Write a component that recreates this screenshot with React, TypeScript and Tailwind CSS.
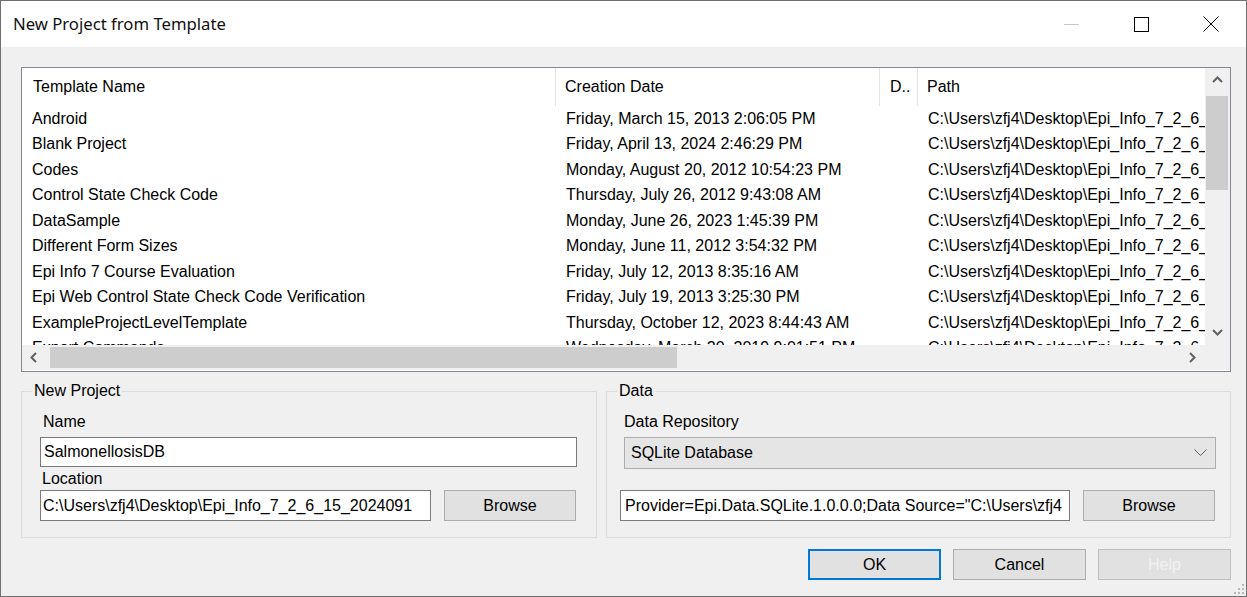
import React from "react";

const rows = [
  ["Android", "Friday, March 15, 2013 2:06:05 PM"],
  ["Blank Project", "Friday, April 13, 2024 2:46:29 PM"],
  ["Codes", "Monday, August 20, 2012 10:54:23 PM"],
  ["Control State Check Code", "Thursday, July 26, 2012 9:43:08 AM"],
  ["DataSample", "Monday, June 26, 2023 1:45:39 PM"],
  ["Different Form Sizes", "Monday, June 11, 2012 3:54:32 PM"],
  ["Epi Info 7 Course Evaluation", "Friday, July 12, 2013 8:35:16 AM"],
  ["Epi Web Control State Check Code Verification", "Friday, July 19, 2013 3:25:30 PM"],
  ["ExampleProjectLevelTemplate", "Thursday, October 12, 2023 8:44:43 AM"],
  ["Export Commands", "Wednesday, March 20, 2019 9:01:51 PM"],
];

const PATH = "C:\\Users\\zfj4\\Desktop\\Epi_Info_7_2_6_15_20240910\\Projects\\Templates";

// small scrollbar arrow, points up/down/left/right
function Arrow({ dir }: { dir: "up" | "down" | "left" | "right" }) {
  const pts = {
    up: "1,7 5.5,2.5 10,7",
    down: "1,3 5.5,7.5 10,3",
    left: "7,1 2.5,5.5 7,10",
    right: "3,1 7.5,5.5 3,10",
  }[dir];
  return (
    <svg width="11" height="11" viewBox="0 0 11 11">
      <polyline points={pts} fill="none" stroke="#606060" strokeWidth="2" />
    </svg>
  );
}

function Btn({ children, className = "" }: { children: React.ReactNode; className?: string }) {
  return (
    <div className={`flex items-center justify-center w-[132px] h-[31px] border bg-[#e1e1e1] ${className}`}>
      {children}
    </div>
  );
}

export default function App() {
  return (
    <div className="relative w-[1247px] h-[597px] border border-[#6f6f6f] bg-[#f0f0f0] flex flex-col overflow-hidden text-[16px] text-black font-['Liberation_Sans',Arial,sans-serif]">
      {/* title bar */}
      <div className="h-[46px] bg-white flex items-center shrink-0">
        <div className="pl-[12px] flex-1 text-[16.7px] font-['Noto_Sans',sans-serif] text-[#111]">
          New Project from Template
        </div>
        <div className="w-[70px] h-full flex items-center justify-center">
          <div className="w-[15px] h-px bg-[#c8c8c8]" />
        </div>
        <div className="w-[70px] h-full flex items-center justify-center">
          <div className="w-[15px] h-[15px] border border-black" />
        </div>
        <div className="w-[70px] h-full flex items-center justify-center">
          <svg width="16" height="16" viewBox="0 0 16 16">
            <path d="M0.5 0.5 L15.5 15.5 M15.5 0.5 L0.5 15.5" stroke="#000" strokeWidth="1" />
          </svg>
        </div>
      </div>

      <div className="flex-1 flex flex-col pt-[20px] pl-[20px] pr-[15px]">
        {/* template list */}
        <div className="h-[305px] border border-[#828790] bg-white flex flex-col">
          <div className="flex h-[277px]">
            <div className="flex-1 overflow-hidden">
              <div className="flex h-[38px] items-center whitespace-nowrap">
                <div className="w-[534px] h-full flex items-center pl-[11px] border-r border-[#e5e5e5]">Template Name</div>
                <div className="w-[324px] h-full flex items-center pl-[9px] border-r border-[#e5e5e5]">Creation Date</div>
                <div className="w-[38px] h-full flex items-center pl-[10px] border-r border-[#e5e5e5]">D..</div>
                <div className="flex-1 h-full flex items-center pl-[9px]">Path</div>
              </div>
              {rows.map(([name, date]) => (
                <div key={name} className="flex h-[25.5px] items-center whitespace-nowrap">
                  <div className="w-[534px] pl-[10px] overflow-hidden">{name}</div>
                  <div className="w-[324px] pl-[10px] overflow-hidden">{date}</div>
                  <div className="w-[38px]" />
                  <div className="flex-1 pl-[10px] overflow-hidden">{PATH}</div>
                </div>
              ))}
            </div>
            {/* vertical scrollbar */}
            <div className="w-[25px] bg-[#f0f0f0] flex flex-col">
              <div className="h-[25px] flex items-center justify-center"><Arrow dir="up" /></div>
              <div className="flex-1 pt-[3px] px-[1px]">
                <div className="h-[94px] w-[22px] bg-[#cdcdcd]" />
              </div>
              <div className="h-[25px] flex items-center justify-center"><Arrow dir="down" /></div>
            </div>
          </div>
          {/* horizontal scrollbar */}
          <div className="flex h-[25px]">
            <div className="flex-1 bg-[#f0f0f0] flex items-center">
              <div className="w-[25px] h-full flex items-center justify-center"><Arrow dir="left" /></div>
              <div className="flex-1 h-full py-[2px] pl-[3px]">
                <div className="w-[627px] h-full bg-[#cdcdcd]" />
              </div>
              <div className="w-[25px] h-full flex items-center justify-center"><Arrow dir="right" /></div>
            </div>
            <div className="w-[25px] bg-[#f0f0f0]" />
          </div>
        </div>

        {/* group boxes */}
        <div className="flex gap-[9px] mt-[10px]">
          <fieldset className="w-[576px] border border-[#dcdcdc]">
            <legend className="ml-[10px] px-[2px] leading-[18px]">New Project</legend>
            <div className="px-[18px] pb-[16px]">
              <div className="mt-[13px] pl-[3px] leading-[18px]">Name</div>
              <div className="mt-[6px] h-[30px] border border-[#7a7a7a] bg-white flex items-center pl-[3px] mr-[1px]">SalmonellosisDB</div>
              <div className="mt-[3px] pl-[2px] leading-[18px]">Location</div>
              <div className="mt-[2px] flex gap-[13px]">
                <div className="w-[391px] h-[31px] border border-[#7a7a7a] bg-white flex items-center pl-[2px] whitespace-nowrap overflow-hidden">
                  C:\Users\zfj4\Desktop\Epi_Info_7_2_6_15_2024091
                </div>
                <Btn className="border-[#adadad] h-[30px]">Browse</Btn>
              </div>
            </div>
          </fieldset>

          <fieldset className="w-[625px] border border-[#dcdcdc]">
            <legend className="ml-[10px] px-[2px] leading-[18px]">Data</legend>
            <div className="pl-[13px] pr-[14px] pb-[16px]">
              <div className="mt-[13px] pl-[4px] leading-[18px]">Data Repository</div>
              <div className="mt-[6px] ml-[4px] h-[32px] border border-[#adadad] bg-[#e5e5e5] flex items-center pl-[6px] pr-[8px]">
                <span className="flex-1">SQLite Database</span>
                <svg width="13" height="8" viewBox="0 0 13 8">
                  <polyline points="0.5,0.5 6.5,6.5 12.5,0.5" fill="none" stroke="#606060" strokeWidth="1" />
                </svg>
              </div>
              <div className="mt-[21px] flex gap-[13px]">
                <div className="w-[450px] h-[31px] border border-[#7a7a7a] bg-white flex items-center pl-[4px] whitespace-nowrap overflow-hidden">
                  Provider=Epi.Data.SQLite.1.0.0.0;Data Source="C:\Users\zfj4
                </div>
                <Btn className="border-[#adadad]">Browse</Btn>
              </div>
            </div>
          </fieldset>
        </div>

        {/* dialog buttons */}
        <div className="flex justify-end gap-[12px] mt-[11px]">
          <Btn className="w-[133px] border-2 border-[#0078d7]">OK</Btn>
          <Btn className="w-[133px] border-[#adadad]">Cancel</Btn>
          <Btn className="w-[133px] border-[#bfbfbf] bg-[#cccccc] text-[#f2f2f2]">Help</Btn>
        </div>
      </div>

      {/* size grip */}
      <svg className="absolute right-[1px] bottom-[1px]" width="12" height="12" viewBox="0 0 12 12">
        {[
          [9, 1], [9, 5], [5, 5], [9, 9], [5, 9], [1, 9],
        ].map(([x, y]) => (
          <rect key={`${x}-${y}`} x={x} y={y} width="2" height="2" fill="#b8b8b8" />
        ))}
      </svg>
    </div>
  );
}
